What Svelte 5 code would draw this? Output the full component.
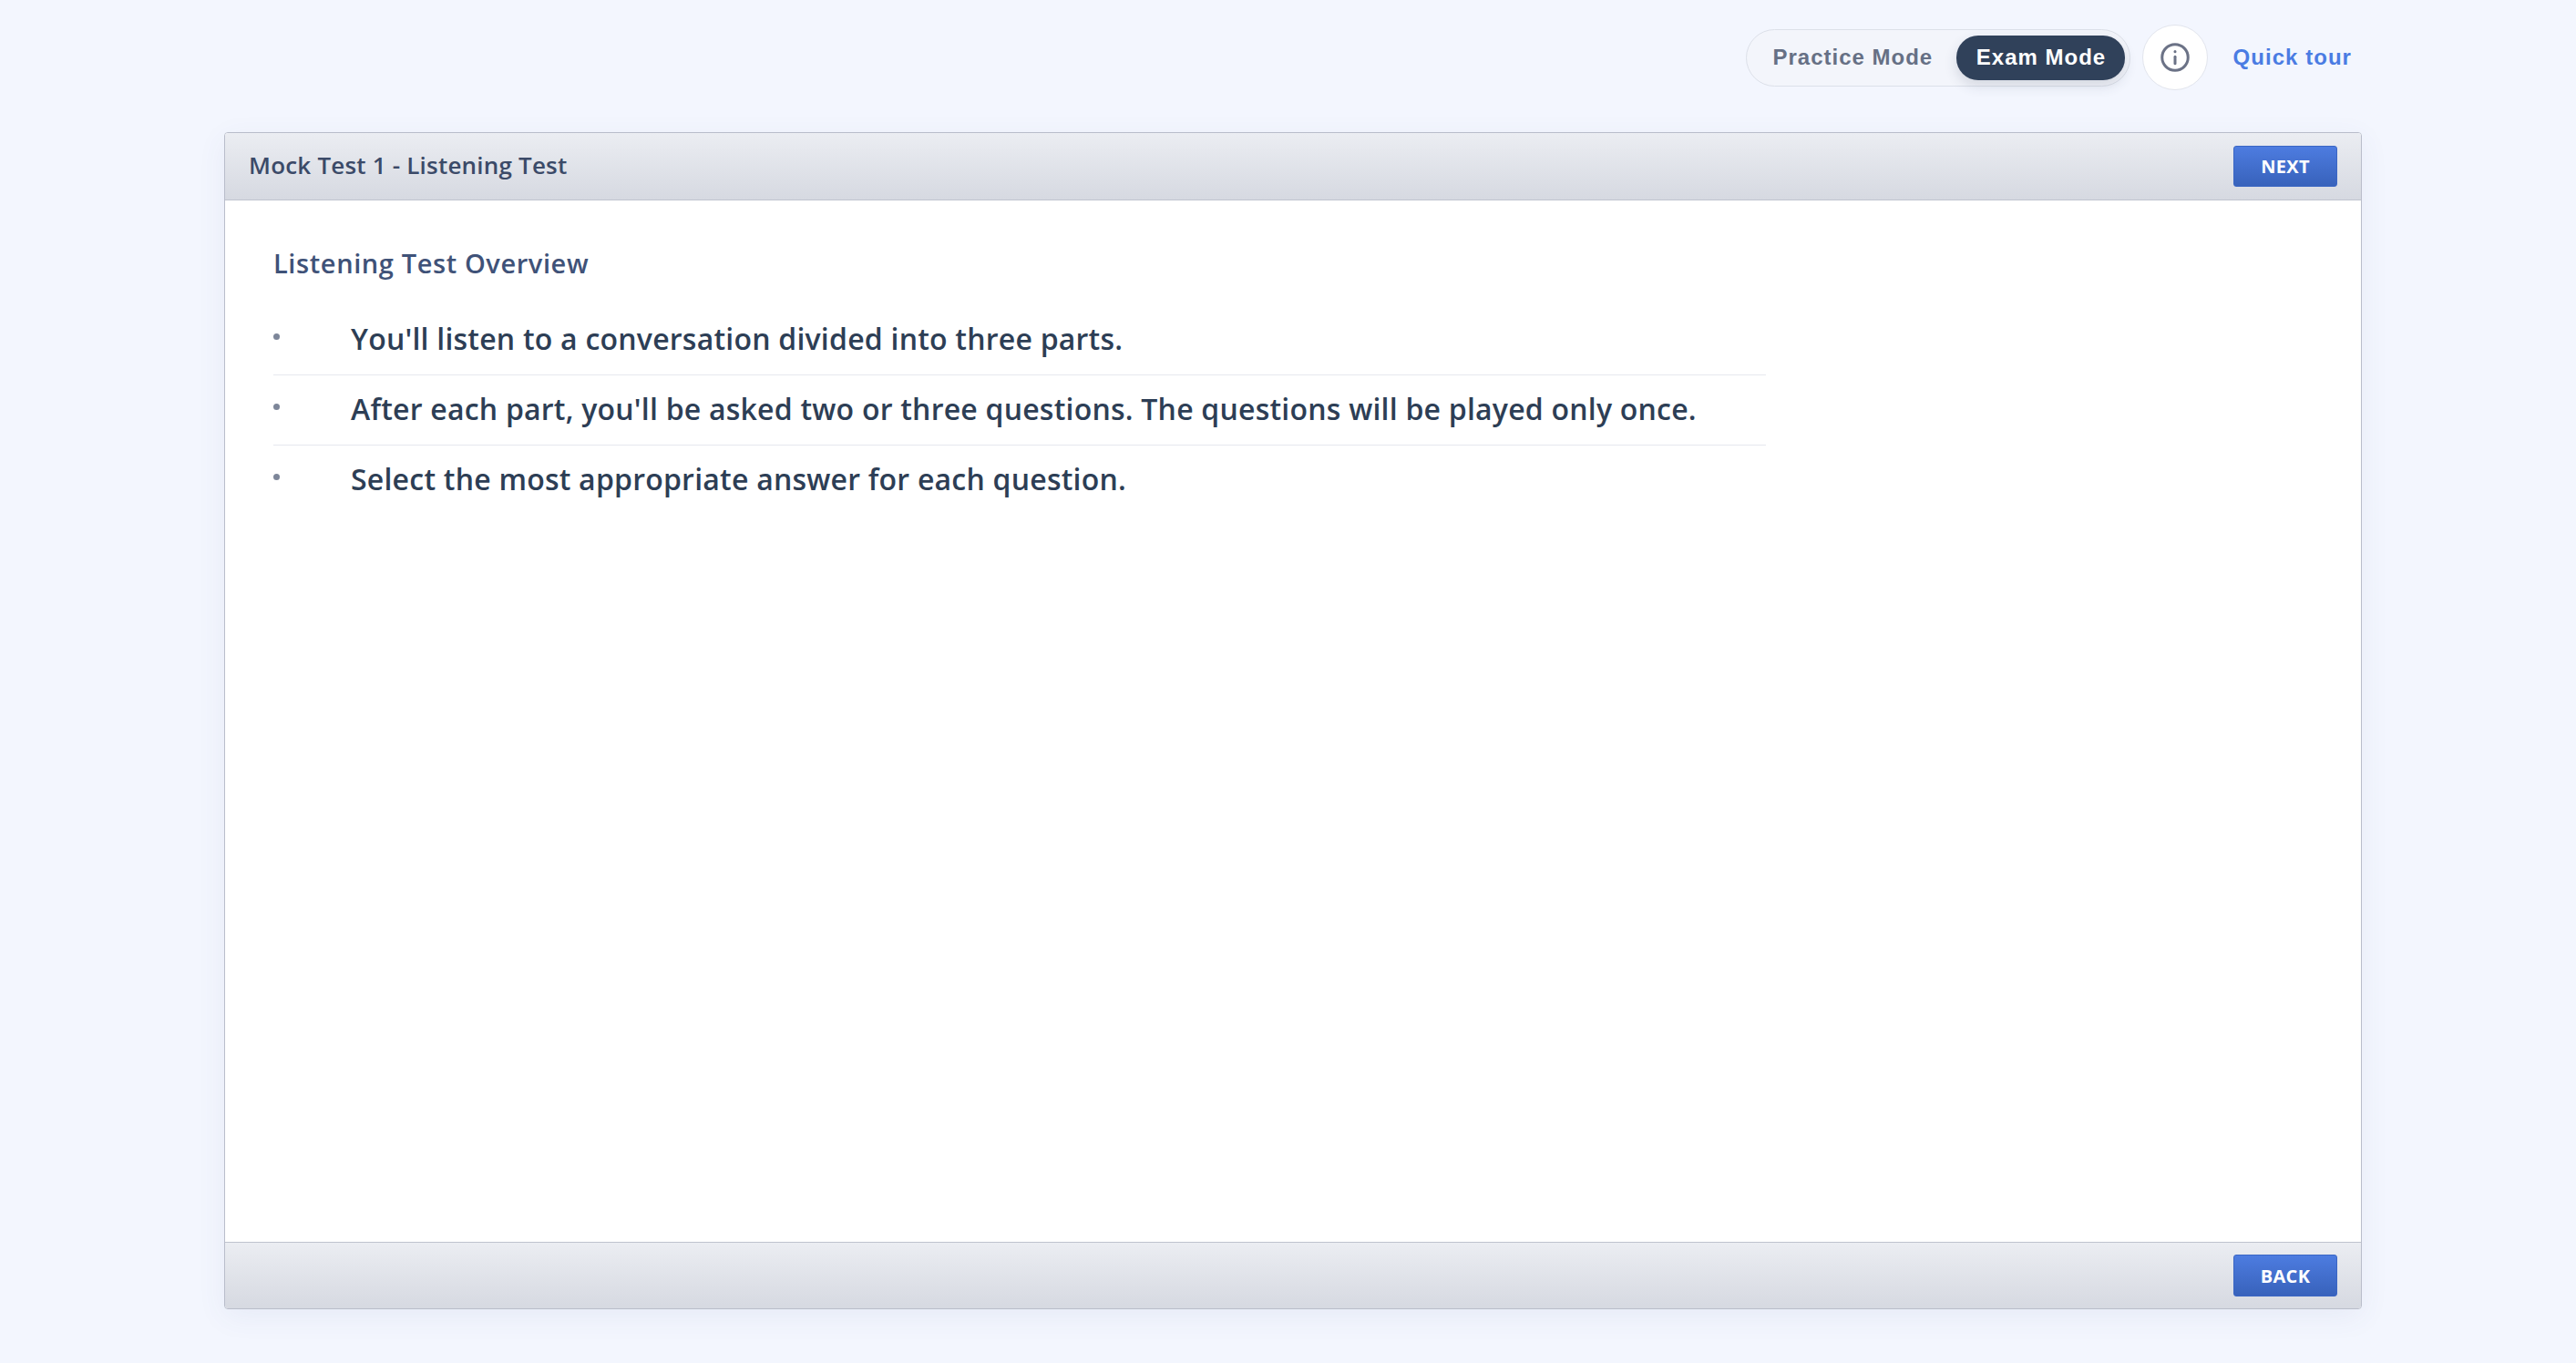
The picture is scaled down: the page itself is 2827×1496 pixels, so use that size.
<script lang="ts">
	let mode = $state('exam');
	const points = [
		"You'll listen to a conversation divided into three parts.",
		"After each part, you'll be asked two or three questions. The questions will be played only once.",
		'Select the most appropriate answer for each question.'
	];
</script>

<div class="page">
	<div class="topbar">
		<div class="toggle">
			<button class="mode" class:active={mode === 'practice'} onclick={() => (mode = 'practice')}>Practice Mode</button>
			<button class="mode" class:active={mode === 'exam'} onclick={() => (mode = 'exam')}>Exam Mode</button>
		</div>
		<button class="info" aria-label="Mode information">
			<svg viewBox="0 0 24 24" width="36" height="36" fill="none" stroke="currentColor" stroke-width="2" stroke-linecap="round">
				<circle cx="12" cy="12" r="9.5" />
				<path d="M12 11.5v5" />
				<path d="M12 7.6v.2" />
			</svg>
		</button>
		<a class="tour" href="#tour">Quick tour</a>
	</div>

	<main class="card">
		<header class="bar">
			<h1>Mock Test 1 - Listening Test</h1>
			<button class="nav">NEXT</button>
		</header>
		<section class="content">
			<h2>Listening Test Overview</h2>
			<ul>
				{#each points as point}
					<li>{point}</li>
				{/each}
			</ul>
		</section>
		<footer class="bar">
			<span></span>
			<button class="nav">BACK</button>
		</footer>
	</main>
</div>

<style>
	:global(body) {
		margin: 0;
		background: #f3f6fe;
	}
	.page {
		box-sizing: border-box;
		height: 1496px;
		padding: 27px 235px 59px 246px;
		display: flex;
		flex-direction: column;
		font-family: 'Open Sans', 'Liberation Sans', sans-serif;
	}
	.topbar {
		height: 72px;
		margin-bottom: 46px;
		padding-right: 11px;
		display: flex;
		align-items: center;
		justify-content: flex-end;
		font-family: 'Liberation Sans', Arial, sans-serif;
	}
	.toggle {
		box-sizing: border-box;
		height: 63px;
		width: 422px;
		padding: 6px 5px;
		display: flex;
		justify-content: space-between;
		border: 1.5px solid #dce0e9;
		border-radius: 32px;
		background: #f3f5fb;
	}
	.mode {
		border: 0;
		padding: 0 23px;
		border-radius: 24px;
		background: transparent;
		color: #667085;
		font: bold 24px 'Liberation Sans', Arial, sans-serif;
		letter-spacing: 1px;
		white-space: nowrap;
		cursor: pointer;
	}
	.mode.active {
		width: 185px;
		padding: 0;
		background: #30415a;
		color: #fff;
		box-shadow: 0 6px 14px rgba(48, 65, 90, 0.16);
	}
	.info {
		box-sizing: border-box;
		width: 72px;
		height: 72px;
		margin-left: 13px;
		padding: 0;
		display: grid;
		place-items: center;
		border: 1.5px solid #e2e5ed;
		border-radius: 50%;
		background: #fff;
		color: #6b7286;
	}
	.tour {
		margin-left: 27px;
		color: #4a7ce3;
		font-size: 24px;
		font-weight: bold;
		letter-spacing: 1.05px;
		text-decoration: none;
	}
	.card {
		flex: 1;
		display: flex;
		flex-direction: column;
		border: 1px solid #b9bdca;
		border-radius: 4px;
		background: #fff;
		box-shadow: 0 8px 32px rgba(70, 90, 140, 0.07);
	}
	.bar {
		box-sizing: border-box;
		padding: 0 26px;
		display: flex;
		align-items: center;
		justify-content: space-between;
		background: linear-gradient(#ebedf2, #d6d9e1);
	}
	header.bar {
		height: 74px;
		border-bottom: 1px solid #bfc3ce;
		border-radius: 3px 3px 0 0;
	}
	footer.bar {
		height: 73px;
		border-top: 1px solid #bfc3ce;
		border-radius: 0 0 3px 3px;
	}
	h1 {
		margin: 0 0 3px;
		color: #3b4a68;
		font-size: 26px;
		font-weight: 600;
		letter-spacing: 0.2px;
	}
	.nav {
		box-sizing: border-box;
		width: 114px;
		height: 45px;
		border: 1px solid #3a66c4;
		border-radius: 3px;
		background: linear-gradient(#4d7ce0, #3862bb);
		color: #fff;
		font-family: inherit;
		font-size: 20px;
		font-weight: 700;
		letter-spacing: 0.3px;
		cursor: pointer;
	}
	footer .nav {
		height: 46px;
	}
	.content {
		flex: 1;
		padding: 49px 53px;
	}
	h2 {
		margin: 0 0 26px;
		color: #3f5278;
		font-size: 29px;
		line-height: 40px;
		font-weight: 600;
		letter-spacing: 0.6px;
	}
	ul {
		width: 1638px;
		margin: 0;
		padding: 0;
		list-style: none;
	}
	li {
		position: relative;
		box-sizing: border-box;
		height: 77px;
		padding: 15px 0 0 85px;
		color: #2d3e55;
		font-size: 32px;
		line-height: 44px;
		font-weight: 600;
		letter-spacing: 0.22px;
		border-bottom: 1px solid #e6e8ee;
	}
	li:last-child {
		border-bottom: 0;
	}
	li::before {
		content: '';
		position: absolute;
		left: 0;
		top: 31px;
		width: 7px;
		height: 7px;
		border-radius: 50%;
		background: #7d8699;
	}
</style>
